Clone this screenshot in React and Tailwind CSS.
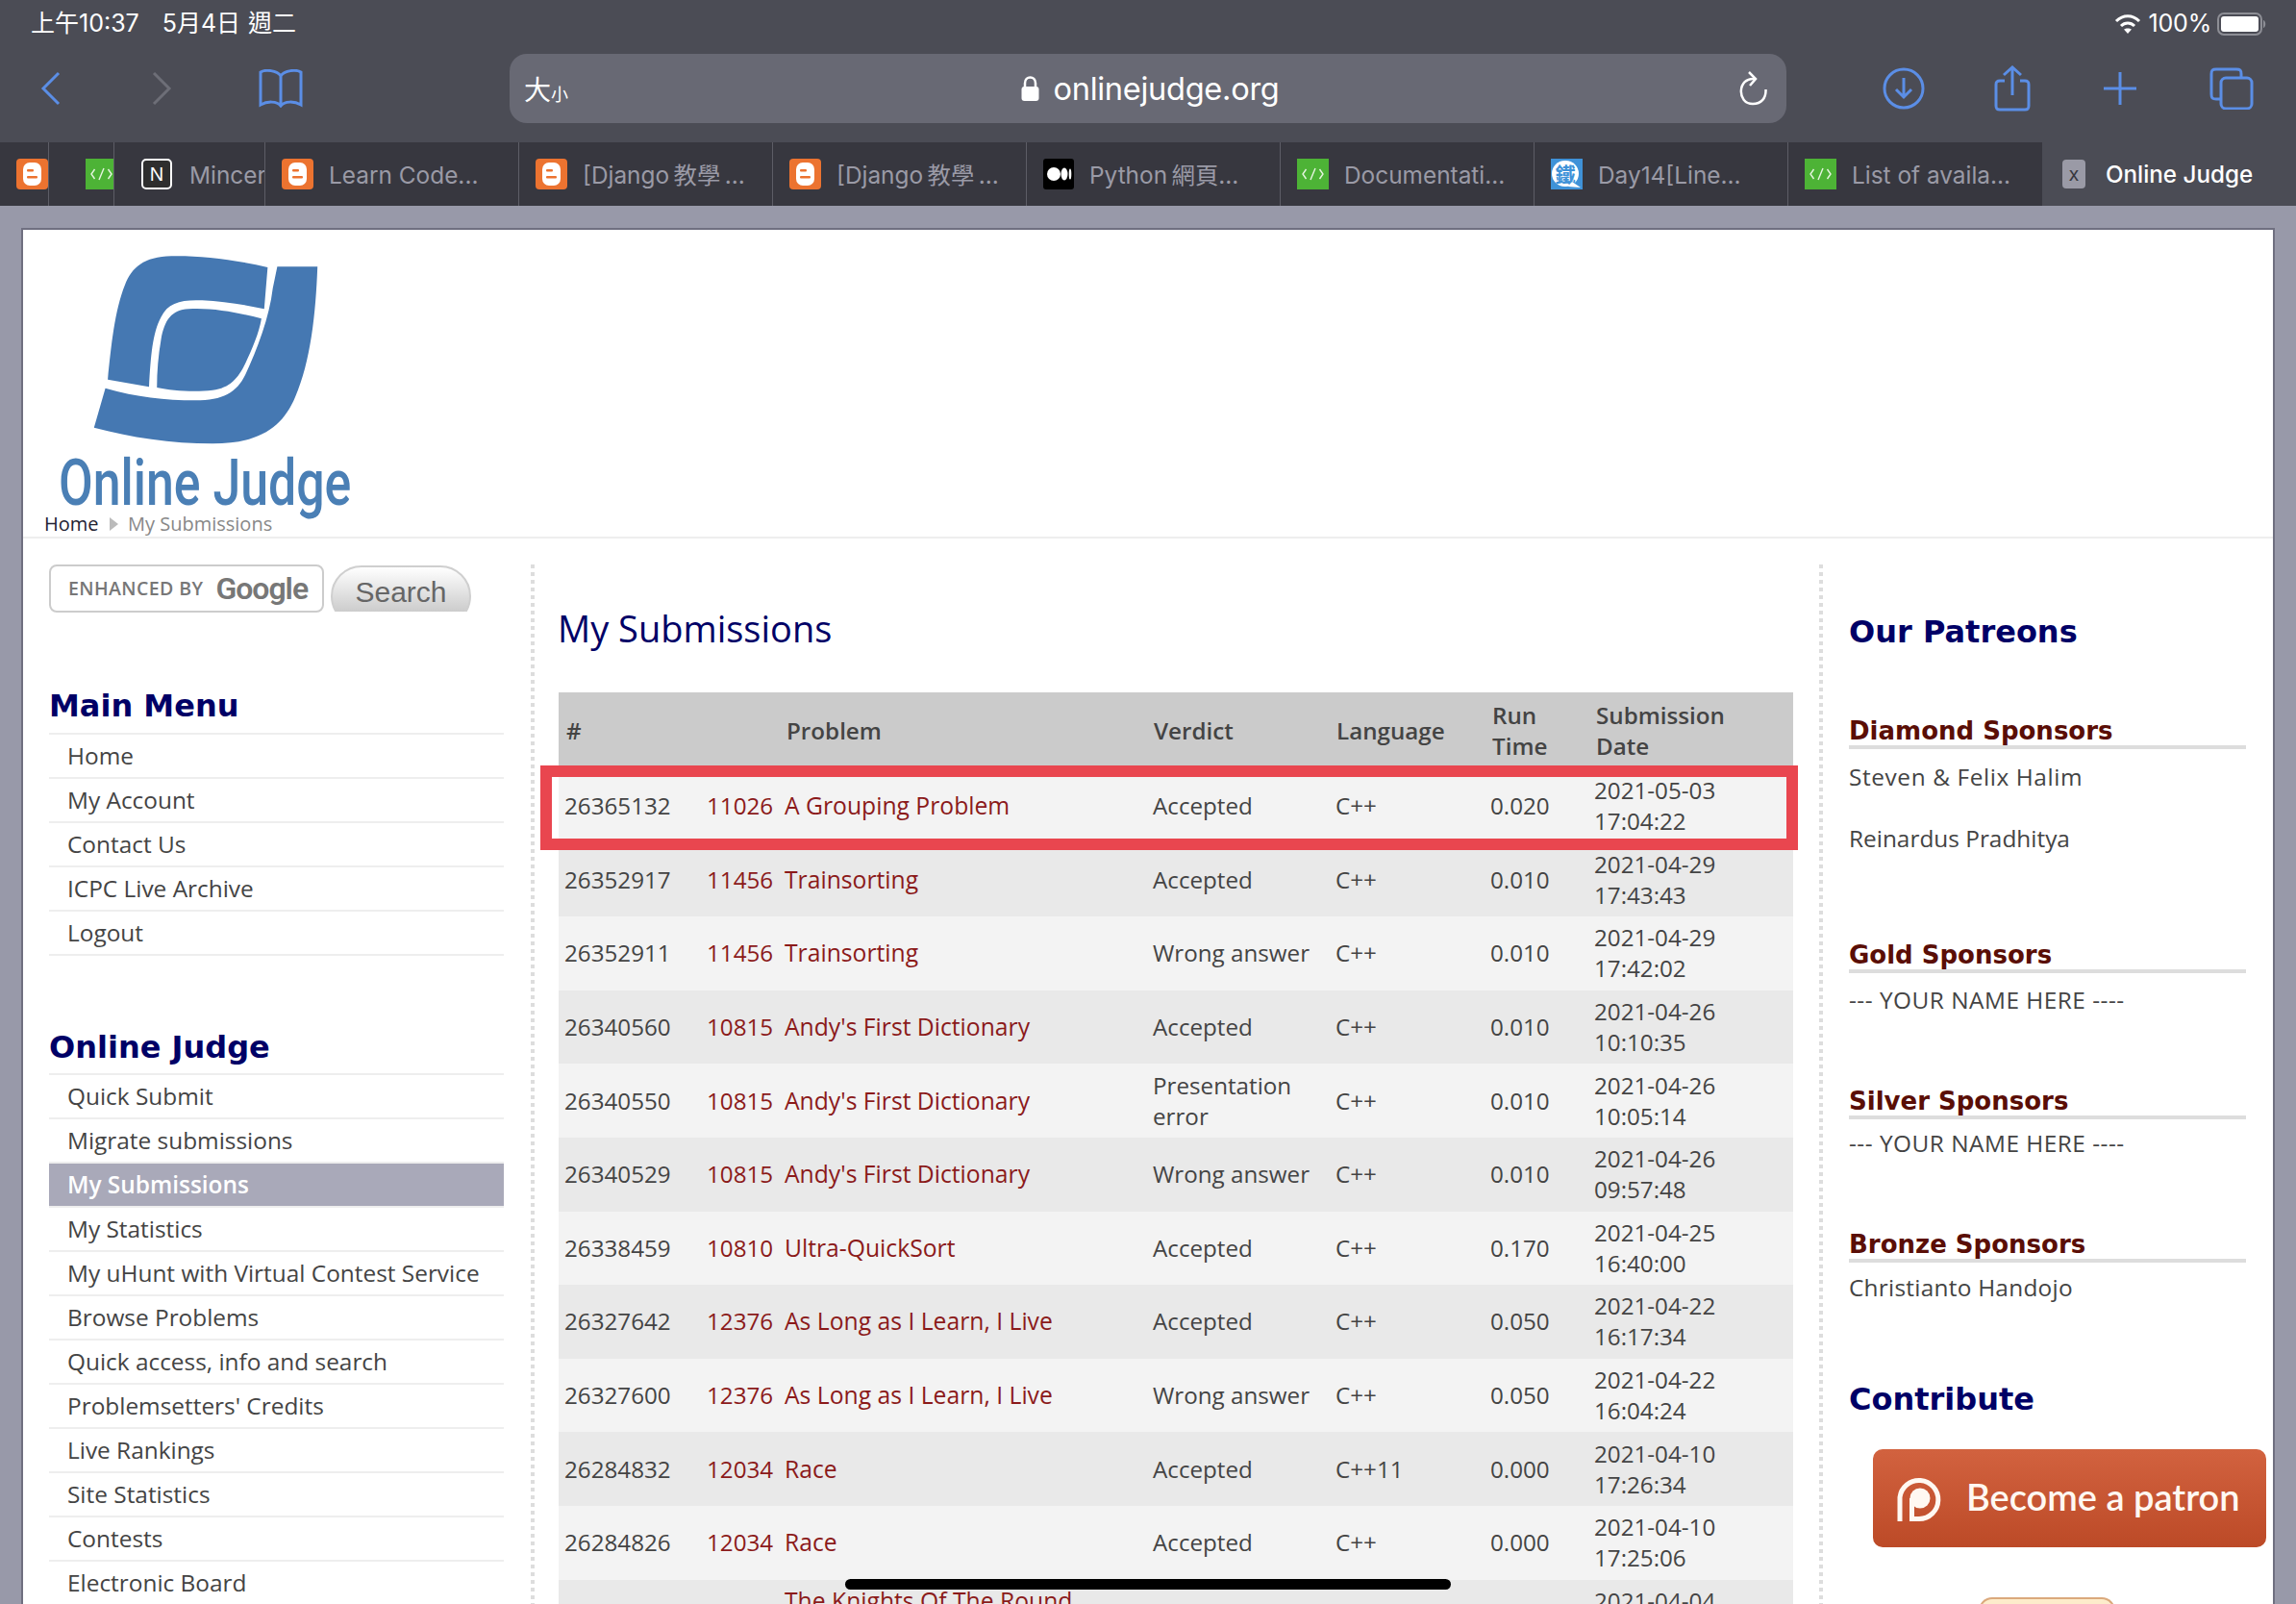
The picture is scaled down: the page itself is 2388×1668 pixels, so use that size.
import React from "react";

const blue = "#5b8ee6";

const rows = [
  ["26365132", "11026", "A Grouping Problem", "Accepted", "C++", "0.020", "2021-05-03", "17:04:22"],
  ["26352917", "11456", "Trainsorting", "Accepted", "C++", "0.010", "2021-04-29", "17:43:43"],
  ["26352911", "11456", "Trainsorting", "Wrong answer", "C++", "0.010", "2021-04-29", "17:42:02"],
  ["26340560", "10815", "Andy's First Dictionary", "Accepted", "C++", "0.010", "2021-04-26", "10:10:35"],
  ["26340550", "10815", "Andy's First Dictionary", "Presentation error", "C++", "0.010", "2021-04-26", "10:05:14"],
  ["26340529", "10815", "Andy's First Dictionary", "Wrong answer", "C++", "0.010", "2021-04-26", "09:57:48"],
  ["26338459", "10810", "Ultra-QuickSort", "Accepted", "C++", "0.170", "2021-04-25", "16:40:00"],
  ["26327642", "12376", "As Long as I Learn, I Live", "Accepted", "C++", "0.050", "2021-04-22", "16:17:34"],
  ["26327600", "12376", "As Long as I Learn, I Live", "Wrong answer", "C++", "0.050", "2021-04-22", "16:04:24"],
  ["26284832", "12034", "Race", "Accepted", "C++11", "0.000", "2021-04-10", "17:26:34"],
  ["26284826", "12034", "Race", "Accepted", "C++", "0.000", "2021-04-10", "17:25:06"],
  ["", "", "The Knights Of The Round\n\u00a0", "", "", "", "2021-04-04", "\u00a0"],
];

const mainMenu = ["Home", "My Account", "Contact Us", "ICPC Live Archive", "Logout"];
const judgeMenu = [
  "Quick Submit",
  "Migrate submissions",
  "My Submissions",
  "My Statistics",
  "My uHunt with Virtual Contest Service",
  "Browse Problems",
  "Quick access, info and search",
  "Problemsetters' Credits",
  "Live Rankings",
  "Site Statistics",
  "Contests",
  "Electronic Board",
];

const BloggerIcon = () => (
  <svg width="33" height="32" viewBox="0 0 33 32" className="shrink-0">
    <rect width="33" height="32" rx="4" fill="#ec7330" />
    <rect x="7" y="4" width="19" height="24" rx="7" fill="#fff" />
    <rect x="11" y="11" width="7" height="2.5" rx="1" fill="#ec7330" />
    <rect x="11" y="18" width="11" height="2.5" rx="1" fill="#ec7330" />
  </svg>
);

const CodeIcon = () => (
  <svg width="33" height="32" viewBox="0 0 33 32" fill="none" stroke="#e6f5e0" strokeWidth="1.4" className="shrink-0">
    <rect width="33" height="32" fill="#4db336" stroke="none" />
    <path d="M9.5 11 L6 16 L9.5 21 M19 10 L14 22 M23.5 11 L27 16 L23.5 21" />
  </svg>
);

const NotionIcon = () => (
  <div className="w-[32px] h-[32px] shrink-0 bg-[#2e2e2e] border-2 border-white rounded-[5px] flex items-center justify-center text-white text-[20px] leading-none font-['Liberation_Sans',sans-serif]">
    N
  </div>
);

const MediumIcon = () => (
  <svg width="32" height="32" viewBox="0 0 32 32" className="shrink-0">
    <rect width="32" height="32" rx="3" fill="#000" />
    <circle cx="11" cy="16" r="7" fill="#fff" />
    <ellipse cx="22" cy="16" rx="3.5" ry="6.5" fill="#fff" />
    <ellipse cx="28" cy="16" rx="1.3" ry="5.5" fill="#fff" />
  </svg>
);

const IthomeIcon = () => (
  <div className="relative w-[33px] h-[32px] shrink-0 bg-[#3f92d8] overflow-hidden">
    <div className="absolute left-[1px] top-[2px] w-[28px] h-[27px] rounded-full bg-white flex items-center justify-center text-[#3f92d8] text-[21px] leading-none font-bold font-['Noto_Sans_CJK_TC',sans-serif]">
      鐵
    </div>
    <svg width="33" height="32" viewBox="0 0 33 32" className="absolute left-0 top-0">
      <path d="M22 24 L31 30 L18 29 Z" fill="#fff" />
    </svg>
  </div>
);

const Tab = ({ icon, label, width = "w-[264px]" }) => (
  <div className={`${width} h-full shrink-0 flex items-center pl-[17px] border-r border-[#5d5d66] overflow-hidden`}>
    {icon}
    <span className="ml-[16px] mt-[2px] text-[24.4px] text-[#9a9aa6] whitespace-nowrap font-['Inter','Noto_Sans_CJK_TC',sans-serif]">
      {label}
    </span>
  </div>
);

const TopBar = () => (
  <div className="bg-[#4b4c55] h-[148px]">
    <div className="h-[56px] flex items-start justify-between pl-[32px] pr-[30px] text-white text-[25px] font-['Inter','Noto_Sans_CJK_TC',sans-serif]">
      <div className="flex h-[50px] items-center">
        <span>上午10:37</span>
        <span className="ml-[24px]">5月4日</span>
        <span className="ml-[8px]">週二</span>
      </div>
      <div className="flex h-[50px] items-center">
        <svg width="28" height="22" viewBox="0 0 28 22" fill="none" stroke="#fff" strokeWidth="3">
          <path d="M2 8 C9 1 19 1 26 8" />
          <path d="M7 13 C11 9 17 9 21 13" />
          <path d="M14 21 L10 16.5 C12 15 16 15 18 16.5 Z" fill="#fff" stroke="none" />
        </svg>
        <span className="ml-[8px] tracking-[-0.2px]">100%</span>
        <svg width="52" height="24" viewBox="0 0 52 24" className="ml-[6px]">
          <rect x="1" y="1" width="45" height="22" rx="6" fill="none" stroke="#8d8e95" strokeWidth="2" />
          <rect x="4" y="4" width="39" height="16" rx="3" fill="#fff" />
          <path d="M48 8 C51 9 51 15 48 16 Z" fill="#8d8e95" />
        </svg>
      </div>
    </div>
    <div className="h-[72px] flex items-center pl-[42px]">
      <svg width="21" height="36" viewBox="0 0 21 36" fill="none" stroke={blue} strokeWidth="3">
        <path d="M19 2 L3 18 L19 34" />
      </svg>
      <svg width="21" height="36" viewBox="0 0 21 36" fill="none" stroke="#6d6e77" strokeWidth="3" className="ml-[95px]">
        <path d="M2 2 L18 18 L2 34" />
      </svg>
      <svg width="48" height="40" viewBox="0 0 48 40" fill="none" stroke={blue} strokeWidth="3" className="ml-[89px]">
        <path d="M24 7 C20 1 8 0 3 3 V37 C10 33 20 33 24 38 C28 33 38 33 45 37 V3 C40 0 28 1 24 7 Z M24 7 V38" />
      </svg>
      <div className="ml-[214px] w-[1328px] h-[72px] rounded-[18px] bg-[#686974] grid grid-cols-[1fr_auto_1fr] items-center pl-[15px] pr-[20px] text-white">
        <div className="flex items-end font-['Noto_Sans_CJK_TC',sans-serif] leading-none">
          <span className="text-[28px]">大</span>
          <span className="text-[18px]">小</span>
        </div>
        <div className="flex items-center translate-x-[5px]">
          <svg width="19" height="26" viewBox="0 0 19 26">
            <path d="M4 12 V7.5 C4 -0.5 15 -0.5 15 7.5 V12" fill="none" stroke="#fff" strokeWidth="2.5" />
            <rect x="0.5" y="11" width="18" height="15" rx="3" fill="#fff" />
          </svg>
          <span className="ml-[14px] text-[32.6px] font-['Inter',sans-serif] tracking-[-0.3px]">onlinejudge.org</span>
        </div>
        <div className="flex justify-end">
          <svg width="30" height="36" viewBox="0 0 30 36" fill="none" stroke="#fff" strokeWidth="2.5">
            <path d="M17 8 C-1 6 -2 34 15 34 C24 34 29 28 28.5 19" />
            <path d="M11 1 L18 8 L12 15" />
          </svg>
        </div>
      </div>
      <svg width="44" height="44" viewBox="0 0 44 44" fill="none" stroke={blue} strokeWidth="3" className="ml-[100px]">
        <circle cx="22" cy="22" r="20" />
        <path d="M22 11 V31 M14 23 L22 31 L30 23" />
      </svg>
      <svg width="40" height="48" viewBox="0 0 40 48" fill="none" stroke={blue} strokeWidth="3" className="ml-[71px]">
        <path d="M12 16 H7 C4 16 3 17 3 20 V42 C3 45 4 46 7 46 H33 C36 46 37 45 37 42 V20 C37 17 36 16 33 16 H28" />
        <path d="M20 31 V2 M11 10 L20 2 L29 10" />
      </svg>
      <svg width="36" height="36" viewBox="0 0 36 36" stroke={blue} strokeWidth="3" className="ml-[74px]">
        <path d="M18 1 V35 M1 18 H35" />
      </svg>
      <svg width="46" height="44" viewBox="0 0 46 44" fill="none" stroke={blue} strokeWidth="3" className="ml-[75px]">
        <path d="M11 33 H7 C3 33 2 32 2 28 V7 C2 3 3 2 7 2 H28 C32 2 33 3 33 7 V11" />
        <rect x="12" y="11" width="32" height="32" rx="5" />
      </svg>
    </div>
  </div>
);

const TabBar = () => (
  <div className="h-[66px] bg-[#37373f] flex">
    <Tab width="w-[51px]" icon={<BloggerIcon />} label="" />
    <div className="w-[68px] h-full shrink-0 flex items-center pl-[38px] border-r border-[#5d5d66] overflow-hidden">
      <CodeIcon />
    </div>
    <div className="w-[157px] h-full shrink-0 flex items-center pl-[28px] border-r border-[#5d5d66] overflow-hidden">
      <NotionIcon />
      <span className="ml-[18px] mt-[2px] text-[24.4px] text-[#9a9aa6] font-['Inter',sans-serif]">Mincer</span>
    </div>
    <Tab icon={<BloggerIcon />} label="Learn Code..." />
    <Tab icon={<BloggerIcon />} label={"[Django\u2009教學\u2009..."} />
    <Tab icon={<BloggerIcon />} label={"[Django\u2009教學\u2009..."} />
    <Tab icon={<MediumIcon />} label={"Python\u2009網頁..."} />
    <Tab icon={<CodeIcon />} label="Documentati..." />
    <Tab icon={<IthomeIcon />} label="Day14[Line..." />
    <div className="w-[264px] h-full shrink-0 flex items-center pl-[17px] overflow-hidden">
      <CodeIcon />
      <span className="ml-[16px] mt-[2px] text-[24.4px] text-[#9a9aa6] whitespace-nowrap font-['Inter',sans-serif]">List of availa...</span>
    </div>
    <div className="w-[264px] h-full bg-[#4b4c55] flex items-center pl-[21px]">
      <div className="w-[24px] h-[30px] bg-[#9a9aa6] rounded-[4px] flex items-center justify-center text-[#37373f] text-[20px] leading-none font-['Inter',sans-serif]">
        x
      </div>
      <span className="ml-[21px] mt-[2px] text-[24.2px] font-medium text-white whitespace-nowrap font-['Inter',sans-serif]">Online Judge</span>
    </div>
  </div>
);

const Logo = () => (
  <svg width="236" height="200" viewBox="270 130 660 600" preserveAspectRatio="none" className="block">
    <path
      fill="#4578b2"
      d="M780 175 C680 150 580 138 500 140 C420 142 385 175 365 230 C335 310 325 420 315 525 L435 548 C440 450 445 380 470 330 C490 285 530 275 590 278 C650 282 710 290 770 305 Z"
    />
    <path
      fill="#4578b2"
      d="M808 173 L925 173 C920 320 905 470 860 580 C825 670 760 725 620 725 C500 725 380 705 275 675 L308 552 C400 580 480 590 570 590 C650 590 690 565 715 510 C750 430 785 330 795 240 Z"
    />
    <path
      fill="#4578b2"
      d="M762 335 C700 318 620 300 550 305 C500 308 480 340 470 400 C462 450 458 500 458 550 C500 560 570 565 620 558 C670 552 695 520 715 475 C735 430 755 380 762 335 Z"
    />
  </svg>
);

const MenuHeading = ({ children, className = "" }) => (
  <h2 className={`h-[40px] leading-[40px] text-[32px] font-bold text-[#000066] font-['DejaVu_Sans',sans-serif] ${className}`}>
    {children}
  </h2>
);

const MenuList = ({ items, active }) => (
  <ul className="border-t-2 border-[#eeeeee]">
    {items.map((item) => (
      <li
        key={item}
        className={`h-[46px] pl-[19px] leading-[44px] border-b-2 border-[#eeeeee] whitespace-nowrap text-[24.4px] font-['Open_Sans',sans-serif] ${
          item === active ? "bg-[#a9a9b9] text-white font-semibold" : "text-[#444444]"
        }`}
      >
        {item}
      </li>
    ))}
  </ul>
);

const Sidebar = () => (
  <div className="w-[473px] shrink-0 ml-[27px] pt-[27px]">
    <div className="flex h-[50px] items-start">
      <div className="w-[286px] h-[50px] border-2 border-[#cccccc] rounded-[8px] flex items-center pl-[18px] text-[#777777]">
        <span className="text-[19.5px] font-semibold font-['Open_Sans',sans-serif] tracking-[0.4px]">ENHANCED BY</span>
        <span className="ml-[13px] text-[32px] font-semibold leading-none tracking-[-1px] font-['Roboto',sans-serif]">Google</span>
      </div>
      <div className="ml-[7px] mt-[1px] w-[146px] h-[48px] overflow-hidden">
        <div className="w-[146px] h-[64px] rounded-full border-2 border-[#cfcfcf] bg-gradient-to-b from-[#ffffff] to-[#bdbdbd] text-center text-[30px] leading-[52px] text-[#666666] font-['Liberation_Sans',sans-serif]">
          Search
        </div>
      </div>
    </div>
    <MenuHeading className="mt-[77px] mb-[8px]">Main Menu</MenuHeading>
    <MenuList items={mainMenu} />
    <MenuHeading className="mt-[75px] mb-[7px]">Online Judge</MenuHeading>
    <MenuList items={judgeMenu} active="My Submissions" />
  </div>
);

const Dots = () => (
  <div className="w-[4px] shrink-0 mt-[27px] h-[1100px] bg-[repeating-linear-gradient(to_bottom,#dddddd_0,#dddddd_4px,transparent_4px,transparent_8px)]" />
);

const SubmissionTable = () => (
  <div className="relative mt-[43px] w-[1284px]">
    <table className="w-[1284px] table-fixed text-[24.2px] leading-[32px] text-[#444444] font-['Open_Sans',sans-serif]">
      <colgroup>
        <col className="w-[148px]" />
        <col className="w-[80px]" />
        <col className="w-[382px]" />
        <col className="w-[191px]" />
        <col className="w-[161px]" />
        <col className="w-[108px]" />
        <col className="w-[214px]" />
      </colgroup>
      <thead>
        <tr className="h-[80px] bg-[#cbcbcb] text-left">
          <th className="font-semibold px-[8px]">#</th>
          <th colSpan="2" className="font-semibold pl-[89px]">Problem</th>
          <th className="font-semibold px-[9px]">Verdict</th>
          <th className="font-semibold px-[8px]">Language</th>
          <th className="font-semibold px-[9px]">Run<br />Time</th>
          <th className="font-semibold px-[9px]">Submission<br />Date</th>
        </tr>
      </thead>
      <tbody>
        {rows.map((row, i) => (
          <tr key={i} className={`h-[76.6px] ${i % 2 === 0 ? "bg-[#f3f3f3]" : "bg-[#e9e9e9]"}`}>
            <td className="px-[6px]">{row[0]}</td>
            <td className="pl-[6px] pr-[7px] text-[#8b1a1a]">{row[1]}</td>
            <td className="px-[7px] text-[24.7px] text-[#8b1a1a] whitespace-pre-line">{row[2]}</td>
            <td className="px-[8px]">{row[3]}</td>
            <td className="px-[7px]">{row[4]}</td>
            <td className="px-[7px]">{row[5]}</td>
            <td className="px-[7px]">
              {row[6]}
              <br />
              {row[7]}
            </td>
          </tr>
        ))}
      </tbody>
    </table>
    <div className="absolute left-[-19px] right-[-5px] top-[76px] h-[88px] border-[12px] border-[#e9464f]" />
  </div>
);

const SponsorHeading = ({ children, className = "" }) => (
  <h3 className={`h-[40px] pt-[6px] border-b-4 border-[#dddddd] text-[26px] leading-[30px] font-bold text-[#5a0e06] font-['DejaVu_Sans',sans-serif] ${className}`}>
    {children}
  </h3>
);

const SponsorName = ({ children, className = "" }) => (
  <p className={`text-[24.4px] leading-[32px] text-[#444444] font-['Open_Sans',sans-serif] ${className}`}>{children}</p>
);

const RightColumn = () => (
  <div className="ml-[27px] w-[413px] shrink-0 pt-[77px]">
    <MenuHeading>Our Patreons</MenuHeading>
    <SponsorHeading className="mt-[62px]">Diamond Sponsors</SponsorHeading>
    <SponsorName className="mt-[13px] tracking-[0.6px]">Steven &amp; Felix Halim</SponsorName>
    <SponsorName className="mt-[32px]">Reinardus Pradhitya</SponsorName>
    <SponsorHeading className="mt-[84px]">Gold Sponsors</SponsorHeading>
    <SponsorName className="mt-[12px] tracking-[0.5px]">--- YOUR NAME HERE ----</SponsorName>
    <SponsorHeading className="mt-[68px]">Silver Sponsors</SponsorHeading>
    <SponsorName className="mt-[9px] tracking-[0.5px]">--- YOUR NAME HERE ----</SponsorName>
    <SponsorHeading className="mt-[68px]">Bronze Sponsors</SponsorHeading>
    <SponsorName className="mt-[10px] tracking-[0.25px]">Christianto Handojo</SponsorName>
    <MenuHeading className="mt-[80px]">Contribute</MenuHeading>
    <div className="mt-[32px] ml-[25px] w-[409px] h-[102px] rounded-[10px] bg-gradient-to-b from-[#d2623f] to-[#bc4a27] flex items-center pl-[25px] text-[#fff8f2]">
      <svg width="46" height="48" viewBox="0 0 46 48" fill="none">
        <path d="M3 48 V23 A20 20 0 1 1 23 45.5 H15" stroke="#fff8f2" strokeWidth="5" />
        <path d="M15.5 48 V24" stroke="#fff8f2" strokeWidth="5" />
        <circle cx="24" cy="24" r="10.5" fill="#fff8f2" />
      </svg>
      <span className="ml-[26px] mb-[3px] text-[38px] font-semibold whitespace-nowrap font-['Lato',sans-serif]">Become a patron</span>
    </div>
    <div className="mt-[52px] ml-[135px] w-[142px] h-[20px] rounded-t-[14px] border-t-2 border-x-2 border-[#dba97c] bg-[#fdeccb]" />
  </div>
);

export default function App() {
  return (
    <div className="relative w-[2388px] h-[1668px] overflow-hidden bg-[#9899a9]">
      <TopBar />
      <TabBar />
      <div className="ml-[22px] mt-[23px] w-[2344px] h-[1500px] border-2 border-[#6f6f80] bg-white">
        <div className="h-[321px] border-b-2 border-[#eeeeee] pt-[24px]">
          <div className="ml-[72px]">
            <Logo />
          </div>
          <div className="ml-[37px] mt-[7px] h-[66px] text-[66px] leading-[66px] font-medium text-[#4a7fb5] whitespace-nowrap origin-left scale-x-[0.785] font-['Roboto',sans-serif]">
            Online Judge
          </div>
          <div className="ml-[22px] mt-[-7px] h-[32px] flex items-center text-[20px] font-['Open_Sans',sans-serif]">
            <span className="w-[68px] text-[#222233]">Home</span>
            <span className="w-0 h-0 border-y-[7px] border-y-transparent border-l-[9px] border-l-[#bbbbbb]" />
            <span className="ml-[10px] text-[#888888]">My Submissions</span>
          </div>
        </div>
        <div className="flex">
          <Sidebar />
          <div className="ml-[28px]">
            <Dots />
          </div>
          <div className="ml-[25px] w-[1284px] shrink-0">
            <h1 className="mt-[69px] -ml-[1px] h-[48px] leading-[48px] text-[38px] text-[#000066] font-['Open_Sans',sans-serif]">My Submissions</h1>
            <SubmissionTable />
          </div>
          <div className="ml-[27px]">
            <Dots />
          </div>
          <RightColumn />
        </div>
      </div>
      <div className="absolute left-[879px] top-[1642px] w-[630px] h-[11px] rounded-full bg-black" />
    </div>
  );
}
